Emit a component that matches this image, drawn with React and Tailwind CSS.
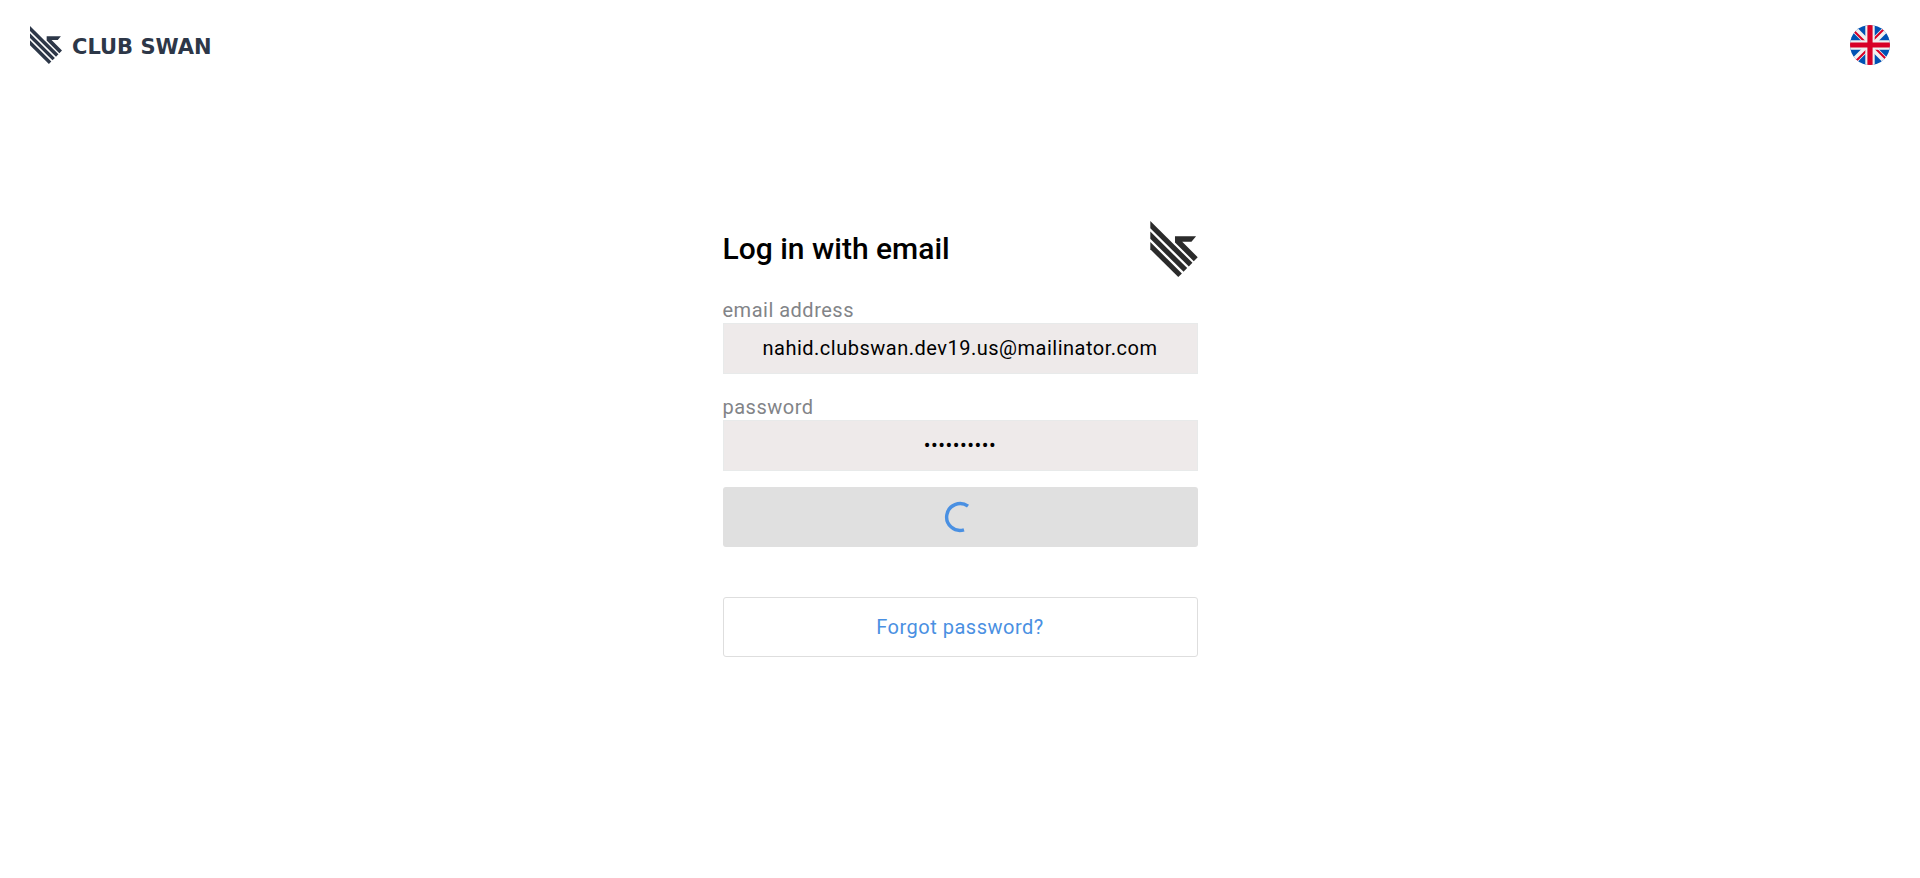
function SwanMark({ className }) {
  return (
    <svg viewBox="0 0 144 170" className={className} fill="currentColor" aria-hidden="true">
      <path d="M75 46H139L125 63H97L144 110L132 122L75 65Z" />
      <path d="M0 0L128 127L117 138L0 22Z" />
      <path d="M0 32L112 143L101 154L0 54Z" />
      <path d="M0 64L96 159L85 170L0 86Z" />
    </svg>
  );
}

function BritishFlag() {
  return (
    <svg viewBox="0 0 40 40" className="size-10" aria-hidden="true">
      <defs>
        <clipPath id="flag-disc">
          <circle cx="20" cy="20" r="20" />
        </clipPath>
      </defs>
      <g clipPath="url(#flag-disc)">
        <path d="M0 0H40V40H0Z" fill="#0052b4" />
        <path d="M2 2L38 38M38 2L2 38" stroke="#f0f0f0" strokeWidth="6.4" />
        <path d="M4.5 6.5L17 19M35.5 33.5L23 21M33.5 4.5L21 17M6.5 35.5L19 23" stroke="#d80027" strokeWidth="2" />
        <path d="M20 0V40M0 20H40" stroke="#f0f0f0" strokeWidth="9.4" />
        <path d="M20 0V40M0 20H40" stroke="#d80027" strokeWidth="5.2" />
      </g>
    </svg>
  );
}

function Spinner() {
  return (
    <svg viewBox="0 0 32 32" className="size-8" fill="none" aria-hidden="true">
      <path d="M24 5.2A13.4 13.4 0 1 0 20 28.8" stroke="#4a90e2" strokeWidth="3.4" />
    </svg>
  );
}

function Field({ id, label, ...props }) {
  return (
    <div className="flex flex-col gap-px">
      <label htmlFor={id} className="text-xl leading-6 tracking-wide text-[#828488]">
        {label}
      </label>
      <input
        id={id}
        className="w-full border border-[#e8eaea] bg-[#eeeaea] px-4 py-3 text-center text-xl leading-[25px] tracking-wide text-black outline-none"
        {...props}
      />
    </div>
  );
}

export default function App() {
  return (
    <div className="min-h-screen bg-white font-['Roboto',sans-serif]">
      <header className="flex items-center justify-between px-[30px] pt-[25px]">
        <a href="#" className="flex items-center gap-2.5 text-[#2d3748]">
          <SwanMark className="h-[38px] w-8" />
          <span className="pt-1 font-['DejaVu_Sans',sans-serif] text-[21px] leading-7 font-bold">CLUB SWAN</span>
        </a>
        <button type="button" aria-label="Language: English">
          <BritishFlag />
        </button>
      </header>

      <main className="px-4 pt-[156px]">
        <form className="mx-auto flex w-full max-w-[475px] flex-col" onSubmit={(e) => e.preventDefault()}>
          <div className="flex items-center justify-between">
            <h1 className="text-3xl font-medium text-black">Log in with email</h1>
            <SwanMark className="h-14 w-12 text-[#2b2b2b]" />
          </div>

          <div className="mt-[21px] flex flex-col gap-[21px]">
            <Field id="email" label="email address" type="email" defaultValue="nahid.clubswan.dev19.us@mailinator.com" />
            <Field id="password" label="password" type="password" defaultValue="swanclub19" />
          </div>

          <button
            type="submit"
            aria-label="Logging in"
            className="mt-4 flex h-[60px] items-center justify-center rounded-[3px] bg-[#e0e0e0]"
          >
            <Spinner />
          </button>

          <button
            type="button"
            className="mt-[50px] h-[60px] rounded-[3px] border border-[#dedede] text-xl tracking-wide text-[#4a90e2]"
          >
            Forgot password?
          </button>
        </form>
      </main>
    </div>
  );
}
